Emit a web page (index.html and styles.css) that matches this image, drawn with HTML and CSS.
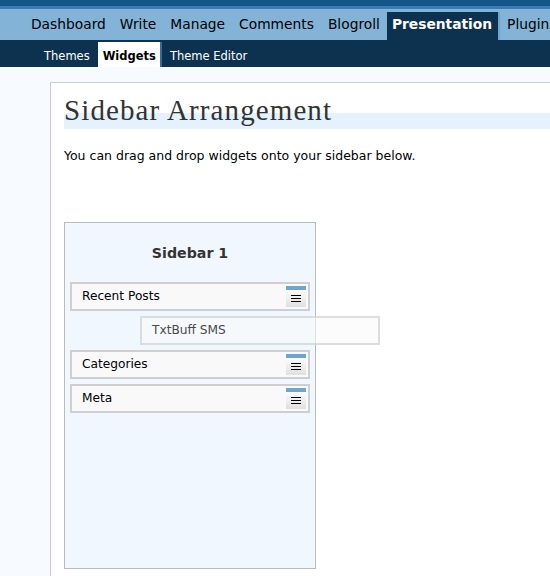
FILE: index.html
```html
<!DOCTYPE html>
<html lang="en">
<head>
<meta charset="utf-8">
<title>Widgets</title>
<link rel="stylesheet" href="styles.css">
</head>
<body>
<div class="masthead"></div>
<ul class="menu">
  <li><a href="#">Dashboard</a></li>
  <li><a href="#">Write</a></li>
  <li><a href="#">Manage</a></li>
  <li><a href="#">Comments</a></li>
  <li><a href="#">Blogroll</a></li>
  <li><a href="#" class="current">Presentation</a></li>
  <li><a href="#">Plugins</a></li>
</ul>
<ul class="submenu">
  <li><a href="#">Themes</a></li>
  <li><a href="#" class="current">Widgets</a></li>
  <li><a href="#">Theme Editor</a></li>
</ul>
<div class="wrap">
  <h2 class="title">Sidebar Arrangement</h2>
  <p class="intro">You can drag and drop widgets onto your sidebar below.</p>
  <div class="sidebar">
    <h3 class="sidebar-title">Sidebar 1</h3>
    <ul class="widgets">
      <li class="widget"><span class="name">Recent Posts</span><span class="handle"><svg width="10" height="7" viewBox="0 0 10 7"><path d="M0 0.5H10M0 3.5H10M0 6.5H10" stroke="#000" stroke-width="1"/></svg></span></li>
      <li class="placeholder"><div class="ghost">TxtBuff SMS</div></li>
      <li class="widget"><span class="name">Categories</span><span class="handle"><svg width="10" height="7" viewBox="0 0 10 7"><path d="M0 0.5H10M0 3.5H10M0 6.5H10" stroke="#000" stroke-width="1"/></svg></span></li>
      <li class="widget"><span class="name">Meta</span><span class="handle"><svg width="10" height="7" viewBox="0 0 10 7"><path d="M0 0.5H10M0 3.5H10M0 6.5H10" stroke="#000" stroke-width="1"/></svg></span></li>
    </ul>
  </div>
</div>
</body>
</html>
```
FILE: styles.css
```css
html, body {
  margin: 0;
  padding: 0;
}
body {
  background: #f7fbff;
  font-family: "DejaVu Sans", Verdana, sans-serif;
  color: #000;
  overflow: hidden;
  width: 550px;
  height: 576px;
}
ul {
  list-style: none;
  margin: 0;
  padding: 0;
}
a {
  text-decoration: none;
}
.masthead {
  height: 6px;
  background: #14568a;
  border-bottom: 3px solid #3a7cb4;
}
.menu {
  display: flex;
  align-items: flex-end;
  height: 31px;
  background: #83b4d8;
  padding-left: 24px;
  white-space: nowrap;
  overflow: hidden;
}
.menu a {
  display: block;
  padding: 0 7px 4px;
  line-height: 24px;
  font-size: 13.8px;
  color: #000;
}
.menu a.current {
  background: #0d324f;
  color: #fff;
  font-weight: bold;
  padding: 0 6px 4px 5px;
  border-right: 2px solid #6da6d1;
}
.submenu {
  display: flex;
  align-items: flex-end;
  height: 27px;
  background: #0d324f;
  padding-left: 39px;
  gap: 3px;
  white-space: nowrap;
}
.submenu a {
  display: block;
  padding: 3px 5px 0;
  line-height: 22px;
  font-size: 11.5px;
  color: #fff;
}
.submenu a.current {
  background: #fff;
  color: #000;
  font-weight: bold;
  padding-right: 4px;
  border-right: 2px solid #2c6ea5;
}
.wrap {
  margin: 15px 0 0 50px;
  background: #fff;
  border: 1px solid #cccccc;
  border-right: none;
  padding-bottom: 40px;
}
.title {
  margin: 25px 0 0 13px;
  font-family: "Liberation Serif", "Times New Roman", serif;
  font-weight: normal;
  font-size: 29px;
  letter-spacing: 1.1px;
  line-height: 5px;
  color: #333;
  border-bottom: 16px solid #e4f2fd;
  white-space: nowrap;
}
.intro {
  margin: 18px 0 0 13px;
  font-size: 12.5px;
  line-height: 18px;
  color: #000;
}
.sidebar {
  box-sizing: border-box;
  margin: 57px 0 0 13px;
  width: 252px;
  height: 347px;
  background: #f0f7ff;
  border: 1px solid #bbbbbb;
  padding: 20px 5px 0;
}
.sidebar-title {
  margin: 0 0 19px;
  text-align: center;
  font-size: 14.2px;
  line-height: 20px;
  font-weight: bold;
  color: #333;
}
.widgets {
  display: flex;
  flex-direction: column;
  gap: 5px;
}
.widget {
  box-sizing: border-box;
  display: flex;
  align-items: flex-start;
  height: 29px;
  background: #f9f9f9;
  border: 2px solid #cfcfcf;
}
.name {
  flex: 1;
  padding-left: 10px;
  line-height: 25px;
  font-size: 12.2px;
  color: #000;
}
.handle {
  box-sizing: content-box;
  display: flex;
  align-items: center;
  justify-content: center;
  width: 20px;
  height: 17px;
  margin: 2px 2px 0 0;
  border-top: 4px solid #6da6d1;
  background: linear-gradient(#fcfcfc, #e0e0e0);
}
.handle svg {
  display: block;
}
.placeholder {
  position: relative;
  height: 29px;
}
.ghost {
  position: absolute;
  top: 0;
  left: 70px;
  box-sizing: border-box;
  width: 240px;
  height: 29px;
  padding-left: 10px;
  line-height: 25px;
  font-size: 12.2px;
  color: #4a4a4a;
  background: rgba(250, 250, 250, 0.6);
  border: 2px solid rgba(200, 200, 200, 0.6);
  z-index: 2;
}
```
